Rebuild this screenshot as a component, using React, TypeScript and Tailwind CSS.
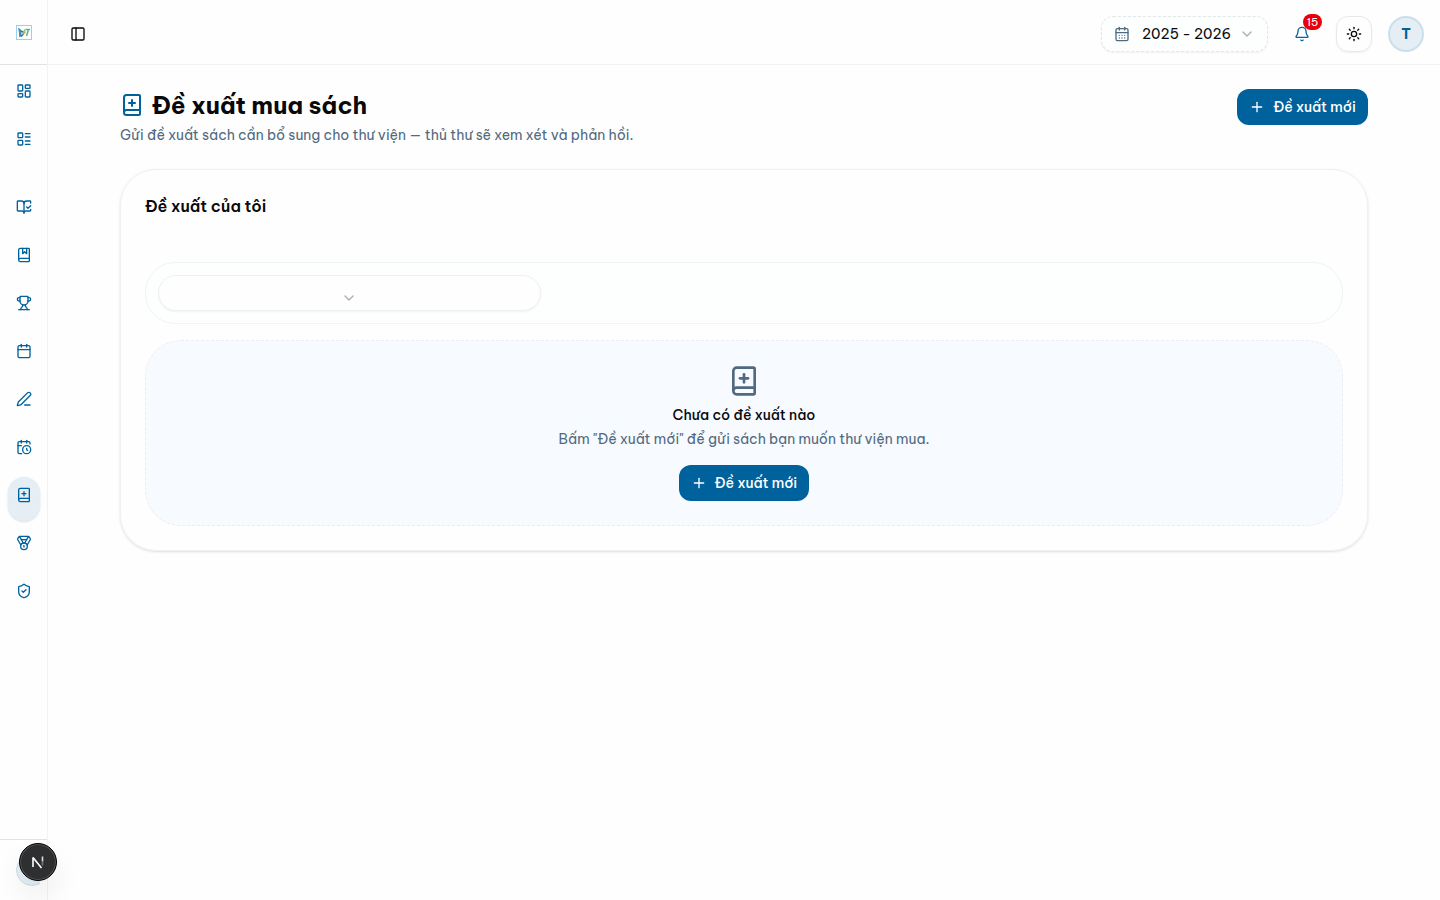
import clsx from 'clsx'
import {
  Bell,
  BookMarked,
  BookOpenCheck,
  Calendar,
  CalendarClock,
  CalendarDays,
  ChevronDown,
  LayoutDashboard,
  LayoutList,
  Medal,
  PanelLeft,
  PenLine,
  Plus,
  ShieldCheck,
  Sun,
  Trophy,
  type LucideIcon,
} from 'lucide-react'

type BookPlusIconProps = {
  className?: string
}

function BookPlusIcon({ className }: BookPlusIconProps) {
  return (
    <svg
      viewBox="0 0 24 24"
      fill="none"
      stroke="currentColor"
      strokeWidth="2"
      strokeLinecap="round"
      strokeLinejoin="round"
      className={className}
    >
      <path d="M12 7v6" />
      <path d="M4 19.5v-15A2.5 2.5 0 0 1 6.5 2H19a1 1 0 0 1 1 1v18a1 1 0 0 1-1 1H6.5a1 1 0 0 1 0-5H20" />
      <path d="M9 10h6" />
    </svg>
  )
}

interface NavItem {
  id: string
  icon: LucideIcon | typeof BookPlusIcon
  active?: boolean
}

const mainItems: NavItem[] = [
  { id: 'dashboard', icon: LayoutDashboard },
  { id: 'list', icon: LayoutList },
]

const libraryItems: NavItem[] = [
  { id: 'reading', icon: BookOpenCheck },
  { id: 'books', icon: BookMarked },
  { id: 'contests', icon: Trophy },
  { id: 'calendar', icon: Calendar },
  { id: 'writing', icon: PenLine },
  { id: 'schedule', icon: CalendarClock },
  { id: 'suggestions', icon: BookPlusIcon, active: true },
  { id: 'awards', icon: Medal },
  { id: 'security', icon: ShieldCheck },
]

function NavGroup({ items }: { items: NavItem[] }) {
  return (
    <nav className="flex flex-col gap-1 px-2">
      {items.map(({ id, icon: Icon, active }) => (
        <button
          key={id}
          className={clsx(
            'flex h-11 w-8 justify-center rounded-2xl pt-2.5 text-[#00629d]',
            active && 'bg-[#e5eef5] shadow-sm',
          )}
        >
          <Icon className="size-4" />
        </button>
      ))}
    </nav>
  )
}

function Logo() {
  return (
    <svg viewBox="0 0 16 16" className="size-4">
      <rect x="0.5" y="0.5" width="15" height="14" fill="#fff" stroke="#a3cfe2" />
      <path d="M2 2.500 5.500 5v6.500L3 12V8z" fill="#3d8fc4" />
      <path d="M5 6.500c2-.5 3 1 2 3l-2 2" fill="none" stroke="#2b6da8" strokeWidth="1.300" />
      <path d="M7 8.500 9 4.500" fill="none" stroke="#8cc152" strokeWidth="1.500" />
      <path d="M7.500 9 9.500 6.500" fill="none" stroke="#f0a33c" strokeWidth="1.500" />
      <path d="M9.500 4.500H14M12.500 4.500 10.500 11" fill="none" stroke="#45b8a5" strokeWidth="1.500" />
    </svg>
  )
}

function Sidebar() {
  return (
    <aside className="flex w-12 shrink-0 flex-col border-r border-[#f2f2f3]">
      <div className="flex h-[65px] items-center justify-center border-b border-[#e2e2e4] pt-0.5">
        <Logo />
      </div>
      <div className="flex flex-1 flex-col gap-6 pt-2">
        <NavGroup items={mainItems} />
        <NavGroup items={libraryItems} />
      </div>
      <div className="h-[61px] border-t border-[#e2e2e4] pt-3.5 pl-4">
        <div className="w-6 overflow-hidden">
          <div className="size-8 rounded-full border border-[#cbdfeb] bg-[#e5eef5]" />
        </div>
      </div>
    </aside>
  )
}

function Header() {
  return (
    <header className="flex h-[65px] shrink-0 items-center border-b border-[#f2f2f3] pt-1 pr-4 pl-[22px]">
      <button>
        <PanelLeft className="size-4" />
      </button>

      <div className="ml-auto flex items-center">
        <button className="flex h-9 w-[167px] items-center rounded-xl border border-dashed border-[#dfe7e7] bg-[#fdfefe] pl-3 shadow-xs">
          <CalendarDays className="size-4 text-[#526a80]" />
          <span className="ml-3 w-[89px] text-left text-sm whitespace-nowrap">2025 - 2026</span>
          <ChevronDown className="ml-2 size-4 text-[#a5b0bc]" />
        </button>

        <button className="relative ml-4 flex size-9 items-center justify-center text-[#00629d]">
          <Bell className="size-4" />
          <span className="absolute -top-0.5 left-[19px] flex h-4 w-[19px] items-center justify-center rounded-full bg-[#e7000b] text-[11px] leading-none text-white">
            15
          </span>
        </button>

        <button className="ml-4 flex size-9 items-center justify-center rounded-xl border border-[#e8e8ea] shadow-xs">
          <Sun className="size-4" />
        </button>

        <button className="ml-4 flex size-9 items-center justify-center rounded-full border-2 border-[#cbdfeb] bg-[#e5eef5] text-sm font-bold text-[#00629d]">
          T
        </button>
      </div>
    </header>
  )
}

function SuggestButton() {
  return (
    <button className="flex h-9 w-[130.8px] items-center rounded-xl bg-[#00629d] pl-3 text-sm font-medium whitespace-nowrap text-white">
      <Plus className="mr-2 size-4" />
      Đề xuất mới
    </button>
  )
}

function EmptyState() {
  return (
    <div className="mt-4 flex h-[186px] flex-col items-center rounded-[36px] border border-dashed border-[#e9eef3] bg-[#f7faff] pt-6">
      <BookPlusIcon className="size-8 text-[#526a80]" />
      <p className="mt-2 text-sm font-medium">Chưa có đề xuất nào</p>
      <p className="mt-1 mb-4 text-sm tracking-[-0.012px] text-[#526a80]">
        Bấm "Đề xuất mới" để gửi sách bạn muốn thư viện mua.
      </p>
      <SuggestButton />
    </div>
  )
}

export default function App() {
  return (
    <div className="flex h-screen overflow-hidden bg-[#fefefe] font-['Be_Vietnam_Pro','Inter',sans-serif] text-[#09090b]">
      <Sidebar />

      <div className="flex min-w-0 flex-1 flex-col">
        <Header />

        <main className="px-[72px] pt-6">
          <div className="flex items-start justify-between">
            <div>
              <h1 className="flex h-8 items-center gap-2 text-2xl font-bold">
                <BookPlusIcon className="size-6 text-[#00629d]" />
                Đề xuất mua sách
              </h1>
              <p className="mt-1 text-sm tracking-[-0.012px] text-[#526a80]">
                Gửi đề xuất sách cần bổ sung cho thư viện — thủ thư sẽ xem xét và phản hồi.
              </p>
            </div>
            <SuggestButton />
          </div>

          <section className="mt-6 h-[382px] rounded-[36px] border border-[#f0f0f2] px-6 pt-6 shadow-sm">
            <h2 className="text-base font-semibold">Đề xuất của tôi</h2>

            <div className="mt-11 rounded-[30px] border border-[#f0f4f4] bg-[#fdfefe] p-3">
              <button className="flex h-9 w-[383px] justify-center rounded-full border border-[#edf1f1] bg-[#fefefe] pt-3.5 pr-0.5 shadow-xs">
                <ChevronDown className="size-4 text-[#a5b0bc]" />
              </button>
            </div>

            <EmptyState />
          </section>
        </main>
      </div>

      <button className="fixed bottom-[19px] left-[19px] flex size-[38px] items-center justify-center rounded-full border border-black bg-[#2e2f30] shadow-[inset_0_0_0_1px_#555,0_16px_32px_-8px_rgba(0,0,0,0.2)]">
        <svg viewBox="0 0 14 14" className="size-3.5" fill="none" strokeWidth="1.600">
          <path d="M2 12V2.500L10.500 13" stroke="#fff" strokeLinejoin="bevel" />
          <path d="M11.500 1.500v5" stroke="#ddd" />
          <path d="M11.500 6.500v4" stroke="#777" />
        </svg>
      </button>
    </div>
  )
}
